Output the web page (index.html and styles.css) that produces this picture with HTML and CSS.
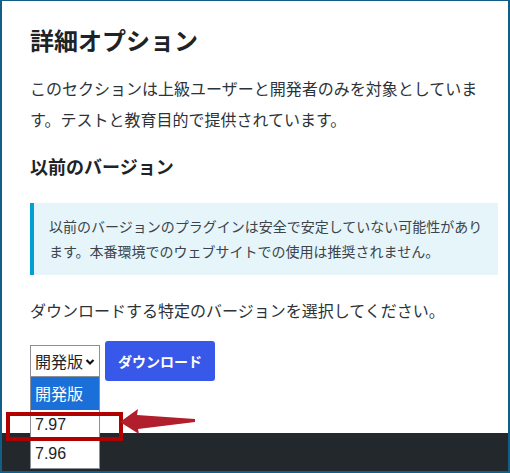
FILE: index.html
```html
<!DOCTYPE html>
<html lang="ja">
<head>
    <meta charset="UTF-8">
    <meta name="viewport" content="width=device-width, initial-scale=1.0">
    <title>詳細オプション</title>
    <link rel="stylesheet" href="styles.css">
</head>
<body>
    <div class="frame">
        <div class="content">
            <h1>詳細オプション</h1>
            <p class="intro">このセクションは上級ユーザーと開発者のみを対象としています。テストと教育目的で提供されています。</p>
            <h2>以前のバージョン</h2>
            <div class="notice">以前のバージョンのプラグインは安全で安定していない可能性があります。本番環境でのウェブサイトでの使用は推奨されません。</div>
            <p class="pick">ダウンロードする特定のバージョンを選択してください。</p>
            <div class="row">
                <div class="select">
                    <span>開発版</span>
                    <svg class="chevron" width="10" height="8" viewBox="0 0 10 8">
                        <path d="M1.5 2 L5 5.5 L8.5 2" fill="none" stroke="#111" stroke-width="2.2"/>
                    </svg>
                    <ul class="dropdown">
                        <li class="active">開発版</li>
                        <li>7.97</li>
                        <li>7.96</li>
                    </ul>
                </div>
                <button class="btn">ダウンロード</button>
            </div>
        </div>
        <div class="footer"></div>

        <div class="mark"></div>
        <svg class="arrow" width="80" height="32" viewBox="0 0 80 32">
            <polygon points="2,17 20,4 19,10 77,14 77,17 20,24 21,29" fill="#b11e2c"/>
        </svg>
    </div>
</body>
</html>
```

FILE: styles.css
```css
* {
    box-sizing: border-box;
}
body {
    margin: 0;
    font-family: "Noto Sans CJK JP", "Noto Sans", sans-serif;
    color: #2c3338;
    background: #fff;
}
.frame {
    position: relative;
    width: 510px;
    height: 473px;
    border: 2px solid #135e87;
    border-top-width: 1px;
    display: flex;
    flex-direction: column;
    overflow: hidden;
}
.content {
    flex: 1;
    padding: 23px 10px 0 28px;
}
h1 {
    margin: 0;
    font-size: 24px;
    line-height: 32px;
    font-weight: bold;
    color: #1d2327;
}
.intro {
    margin: 17px 0 0;
    font-size: 16px;
    line-height: 31px;
}
h2 {
    margin: 18px 0 0;
    font-size: 18px;
    line-height: 26px;
    font-weight: bold;
    color: #1d2327;
}
.notice {
    margin-top: 24px;
    padding: 11px 9px 11px 15px;
    border-left: 4px solid #00a0d2;
    background: #e5f5fa;
    font-size: 14px;
    line-height: 25px;
    color: #3c434a;
}
.pick {
    margin: 20px 0 0;
    font-size: 16px;
    line-height: 30px;
}
.row {
    display: flex;
    align-items: center;
    gap: 5px;
    margin-top: 16px;
}
.select {
    position: relative;
    width: 70px;
    height: 32px;
    border: 1px solid #8c8f94;
    display: flex;
    align-items: center;
    justify-content: space-between;
    padding: 0 4px 0 4px;
    font-size: 16px;
    color: #1d2327;
    background: #fff;
}
.chevron {
    margin-top: 1px;
}
.dropdown {
    position: absolute;
    top: 31px;
    left: -1px;
    width: 70px;
    margin: 0;
    padding: 0;
    list-style: none;
    background: #fff;
    border: 1px solid #8c8f94;
    border-top: 0;
    z-index: 2;
}
.dropdown li {
    height: 29px;
    line-height: 29px;
    padding-left: 4px;
    font-family: "Liberation Sans", Arial, sans-serif;
    font-size: 16px;
    color: #1d2327;
}
.dropdown li.active {
    height: 33px;
    line-height: 33px;
    background: #1b6fd8;
    color: #fff;
    font-family: "Noto Sans CJK JP", sans-serif;
}
.btn {
    width: 110px;
    height: 40px;
    border: 0;
    border-radius: 3px;
    background: #3858e9;
    color: #fff;
    font-family: "Noto Sans CJK JP", sans-serif;
    font-size: 14px;
    font-weight: bold;
    cursor: pointer;
}
.footer {
    height: 38px;
    background: #23282d;
}
.mark {
    position: absolute;
    left: 4px;
    top: 411px;
    width: 117px;
    height: 29px;
    border: 4px solid #b00000;
    z-index: 3;
}
.arrow {
    position: absolute;
    left: 116px;
    top: 404px;
    z-index: 3;
}
```
